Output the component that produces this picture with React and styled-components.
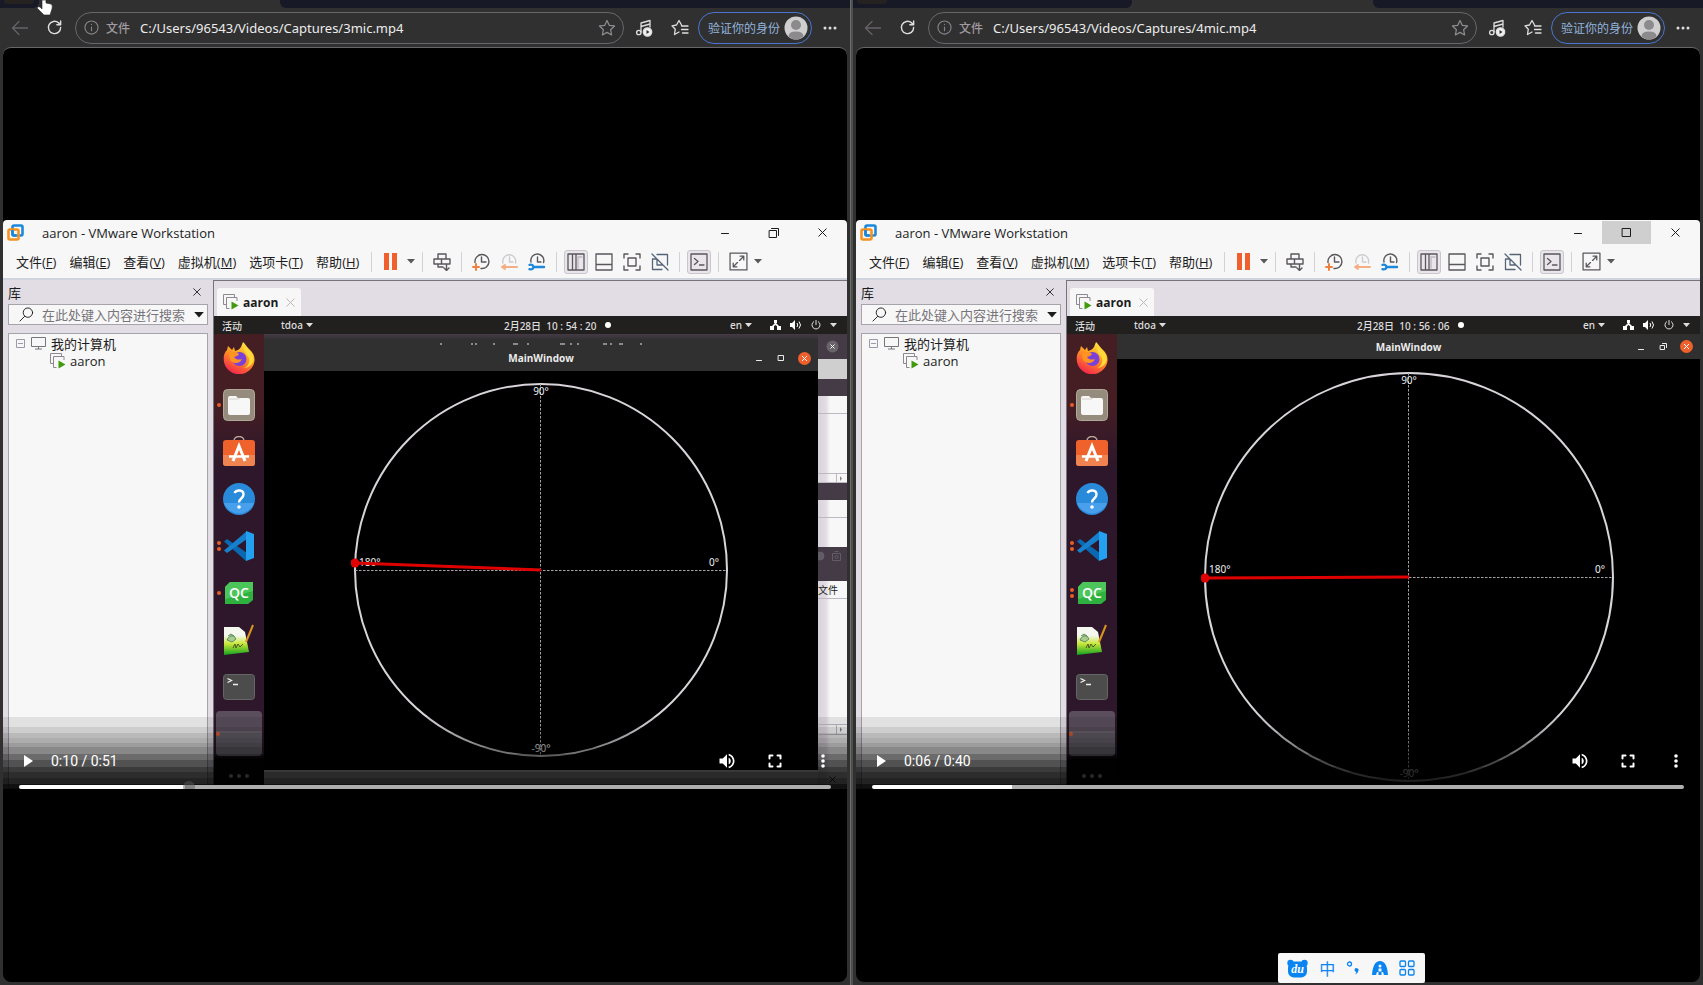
import React, { useState } from 'react';
import styled, { createGlobalStyle } from 'styled-components';

const GlobalStyle = createGlobalStyle`
  * { box-sizing: border-box; }
  body {
    margin: 0;
    background: #303030;
    font-family: 'Open Sans', 'Noto Sans CJK SC', sans-serif;
  }
  button {
    display: flex;
    align-items: center;
    justify-content: center;
    padding: 0;
    border: none;
    background: none;
    color: inherit;
    font: inherit;
    cursor: pointer;
  }
  svg { display: block; flex: none; }
`;

const Screen = styled.div`
  position: relative;
  display: grid;
  grid-template-columns: 1fr 3px 1fr;
  min-height: 100vh;
  overflow: hidden;
`;
const Divider = styled.div`
  background: #4c504c;
  border-left: 1px solid #6a6d6a;
`;
const Browser = styled.section`
  display: flex;
  flex-direction: column;
  min-width: 0;
  background: #303030;
`;

/* browser chrome */
const TabStrip = styled.div`
  display: flex;
  height: 8px;
  background: #303030;
`;
const TabGap = styled.div`
  width: ${(p) => p.$width || 'auto'};
  flex: ${(p) => (p.$width ? 'none' : 1)};
  background: #171a26;
  border-radius: ${(p) => (p.$width ? '0 0 6px 0' : '0 0 0 6px')};
`;
const TabHint = styled.div`
  width: 30px;
  height: 4px;
  margin-left: 4px;
  background: #26221f;
  border-radius: 0 0 8px 8px;
`;
const ActiveTab = styled.div`
  width: 241px;
`;
const Toolbar = styled.div`
  display: flex;
  align-items: center;
  height: 39px;
  padding: 0 4px 0 7px;
  color: #dedede;
`;
const ChromeButton = styled.button`
  width: ${(p) => p.$width || 36}px;
  height: 32px;
  color: ${(p) => (p.$dim ? '#656268' : '#dedede')};
`;
const AddressBar = styled.div`
  flex: 1;
  min-width: 0;
  display: flex;
  align-items: center;
  height: 32px;
  padding: 0 7px 0 8px;
  border: 1px solid #68666a;
  border-radius: 16px;
`;
const Scheme = styled.span`
  margin: 0 8px 0 7px;
  font-size: 12px;
  font-weight: 500;
  color: #a09ba0;
`;
const UrlInput = styled.input`
  flex: 1;
  min-width: 0;
  padding: 0 2px;
  border: none;
  outline: none;
  background: none;
  color: #ececec;
  font-family: 'Noto Sans', sans-serif;
  font-size: 13px;
`;
const Profile = styled.button`
  && {
    height: 32px;
    margin: 0 2px;
    padding: 0 3px 0 9px;
    gap: 4px;
    border: 1px solid #4a74d0;
    border-radius: 16px;
    color: #92b4dc;
    font-size: 12px;
    white-space: nowrap;
  }
`;
const Viewport = styled.main`
  flex: 1;
  display: flex;
  flex-direction: column;
  justify-content: center;
  margin: 0 3px 3px;
  padding-bottom: 21px;
  border-top: 1px solid #68666a;
  border-radius: 8px;
  background: #000;
`;
const Video = styled.div`
  position: relative;
  overflow: hidden;
  background: #f7f7f7;
  color: #1c1c1c;
  border-radius: 4px 4px 0 0;
`;

/* VMware window */
const TitleBar = styled.header`
  display: flex;
  align-items: center;
  height: 25px;
  padding-left: 4px;
`;
const Title = styled.h1`
  flex: 1;
  margin: 0 0 0 18px;
  font-size: 13px;
  font-weight: 400;
`;
const WinButton = styled.button`
  width: 49px;
  height: 23px;
  && { background: ${(p) => (p.$hover ? '#cfcfcf' : 'none')}; }
`;
const MenuBar = styled.nav`
  display: flex;
  align-items: center;
  height: 33px;
  padding-left: 13px;
  font-size: 13px;
`;
const MenuGroup = styled.div`
  display: flex;
  gap: 13px;
  width: 350px;
  flex: none;
`;
const MenuItem = styled.button`
  white-space: nowrap;
`;
const Separator = styled.i`
  width: 1px;
  height: 20px;
  margin: 0 5px;
  background: #d4d0d6;
`;
const ToolButton = styled.button`
  width: ${(p) => p.$width || 28}px;
  height: 28px;
  color: #5a575c;
`;
const Pressed = styled.span`
  padding: 2px;
  border: 1px solid #cbc6ce;
  border-radius: 3px;
  background: #e9e5eb;
`;
const Body = styled.div`
  display: flex;
  border-top: 2px solid #d0d4dc;
  background: #e2dde4;
`;
const Library = styled.aside`
  display: flex;
  flex-direction: column;
  width: 210px;
  padding: 0 5px;
`;
const LibraryHead = styled.div`
  display: flex;
  align-items: center;
  justify-content: space-between;
  height: 24px;
  padding-right: 7px;
  font-size: 13px;
`;
const SearchBox = styled.label`
  display: flex;
  align-items: center;
  height: 21px;
  padding: 0 3px 0 10px;
  border: 1px solid #a7a3ab;
  background: #f7f7f7;
`;
const SearchInput = styled.input`
  flex: 1;
  min-width: 0;
  height: 18px;
  margin-left: 8px;
  padding: 0;
  border: none;
  outline: none;
  background: none;
  font-family: 'Open Sans', 'Noto Sans CJK SC', sans-serif;
  font-size: 13px;
  &::placeholder { color: #77747a; }
`;
const Tree = styled.ul`
  flex: 1;
  margin: 8px 0 0;
  padding: 0 7px;
  border: 1px solid #a7a3ab;
  background: #f7f7f7;
  list-style: none;
`;
const TreeItem = styled.li`
  display: flex;
  align-items: center;
  gap: 4px;
  height: 18px;
  padding-left: ${(p) => p.$indent || 0}px;
  font-size: 13px;
`;
const Machine = styled.div`
  flex: 1;
  min-width: 0;
  display: flex;
  flex-direction: column;
  border-top: 1px solid #77737c;
  border-left: 1px solid #77737c;
`;
const MachineTabs = styled.div`
  display: flex;
  align-items: flex-end;
  height: 35px;
  padding-left: 3px;
`;
const MachineTab = styled.div`
  display: flex;
  align-items: center;
  gap: 4px;
  height: 28px;
  padding: 0 6px;
  border-radius: 3px 3px 0 0;
  background: #f7f7f7;
  font-size: 12px;
  font-weight: 700;
  button { margin-left: 4px; }
`;

/* Ubuntu guest */
const TopPanel = styled.div`
  display: grid;
  grid-template-columns: 5fr auto 4fr;
  align-items: center;
  height: 18px;
  padding: 0 10px 0 8px;
  background: #22201f;
  color: #dedede;
  font-family: 'Noto Sans', 'Noto Sans CJK SC', sans-serif;
  font-size: 10px;
  font-weight: 500;
`;
const PanelGroup = styled.div`
  display: flex;
  align-items: center;
  gap: ${(p) => p.$gap}px;
  justify-content: ${(p) => (p.$end ? 'flex-end' : 'flex-start')};
`;
const PanelButton = styled.button`
  && { gap: 3px; }
`;
const RecordDot = styled.i`
  width: 6px;
  height: 6px;
  border-radius: 50%;
  background: #fff;
`;
const Desktop = styled.div`
  display: flex;
  flex: 1;
`;
const Dock = styled.div`
  display: flex;
  flex-direction: column;
  width: 50px;
  height: 455px;
  background: linear-gradient(#451e24 0 70px, #2e172b 130px 420px, #050305 425px);
`;
const DockItem = styled.button`
  && {
    height: 47px;
    display: grid;
    grid-template-columns: 9px 32px 9px;
  }
`;
const Pips = styled.span`
  display: flex;
  flex-direction: column;
  align-items: center;
  gap: 2px;
  i {
    width: 4px;
    height: 4px;
    border-radius: 50%;
    background: #e55e2a;
  }
`;
const EmptySlot = styled.div`
  display: flex;
  align-items: center;
  height: 45px;
  margin: 1px 2px;
  border-radius: 4px;
  background: linear-gradient(#5a4e5c 45%, #66606a 45%);
`;
const DockDots = styled.div`
  display: flex;
  justify-content: center;
  gap: 4px;
  padding-top: 17px;
  i {
    width: 4px;
    height: 4px;
    border-radius: 50%;
    background: #ddd;
  }
`;
const Stage = styled.div`
  flex: 1;
  min-width: 0;
  display: flex;
  background: #38343e;
`;
const StageColumn = styled.div`
  flex: 1;
  min-width: 0;
  display: flex;
  flex-direction: column;
`;
const BackEdge = styled.div`
  display: flex;
  align-items: flex-end;
  justify-content: center;
  height: 11px;
  background: linear-gradient(#453b47, #303030 6px);
`;
const QtWindow = styled.div`
  flex: 1;
  display: flex;
  flex-direction: column;
  border-bottom: ${(p) => (p.$max ? 0 : 19)}px solid #e8e8e8;
  background: #000;
`;
const QtTitle = styled.div`
  display: grid;
  grid-template-columns: 1fr auto 1fr;
  align-items: center;
  height: ${(p) => (p.$max ? 25 : 26)}px;
  background: #303030;
  color: #ececec;
  font-size: 10px;
  font-weight: 700;
`;
const QtButtons = styled.div`
  grid-column: 3;
  display: flex;
  justify-content: flex-end;
  align-items: center;
  gap: 12px;
  padding-right: 7px;
`;
const QtName = styled.span`
  grid-column: 2;
`;
const DialBox = styled.div`
  display: flex;
  justify-content: center;
  height: 0;
  flex: 1;
  padding-top: ${(p) => (p.$max ? 10 : 9)}px;
`;
const Behind = styled.div`
  width: 29px;
  overflow: hidden;
  display: flex;
  flex-direction: column;
`;
const tones = {
  dark: '#453b47',
  grey: '#cfcfcf',
  light: 'linear-gradient(90deg, #d8d3da, #e2dde4 8px, #f7f7f7 12px)',
};
const Slice = styled.div`
  display: flex;
  align-items: center;
  justify-content: ${(p) => p.$align || 'center'};
  height: ${(p) => p.$height}px;
  background: ${(p) => tones[p.$tone || 'light']};
  border-bottom: ${(p) => (p.$line ? '1px solid #beb8c2' : 'none')};
  font-size: 10px;
  color: #222;
  white-space: nowrap;
`;

/* video controls */
const FADE = [
  [0, 0.09], [10, 0.17], [16, 0.25], [21, 0.3], [26, 0.37], [30, 0.45], [37, 0.57],
  [43, 0.67], [50, 0.76], [55, 0.82], [61, 0.86], [67, 0.93],
];
const fadeStops = FADE.map(([y, a], i) => {
  const end = i + 1 < FADE.length ? FADE[i + 1][0] : 72;
  return `rgba(0,0,0,${a}) ${y}px ${end}px`;
}).join(', ');

const Controls = styled.div`
  position: absolute;
  left: 0;
  right: 0;
  bottom: 0;
  height: 72px;
  padding: 30px 16px 0;
  color: #fff;
  background: linear-gradient(${fadeStops});
`;
const ControlRow = styled.div`
  display: flex;
  align-items: center;
  height: 28px;
  margin-right: -16px;
`;
const ControlButton = styled.button`
  width: ${(p) => p.$width || 48}px;
  height: 28px;
`;
const Time = styled.span`
  flex: 1;
  margin-left: 14px;
  font-family: Roboto, sans-serif;
  font-size: 14px;
`;
const Seek = styled.input`
  appearance: none;
  display: block;
  width: 100%;
  height: 4px;
  margin: 10px 0 0;
  border-radius: 2px;
  background: linear-gradient(90deg, #fff ${(p) => p.$played}%, #afafaf ${(p) => p.$played}%);
  &::-webkit-slider-thumb {
    appearance: none;
    width: 12px;
    height: 12px;
    border-radius: 50%;
    background: ${(p) => (p.$thumb ? 'rgba(90, 90, 90, 0.5)' : 'transparent')};
  }
`;

/* input method bar */
const ImeBar = styled.div`
  position: absolute;
  right: 278px;
  bottom: 2px;
  display: flex;
  align-items: center;
  justify-content: space-between;
  width: 147px;
  height: 30px;
  padding: 0 10px 0 9px;
  border-radius: 2px;
  background: #f7f7f7;
  color: #0a84f0;
  font-size: 16px;
`;
const Pointer = styled.svg`
  position: absolute;
  left: 37px;
  top: 0;
`;

const Line = ({ size = 16, box = 16, w = 1, children }) => (
  <svg width={size} height={size} viewBox={`0 0 ${box} ${box}`} fill='none' stroke='currentColor' strokeWidth={w} strokeLinecap='round' strokeLinejoin='round'>
    {children}
  </svg>
);
const Caret = ({ w = 8, color = 'currentColor' }) => (
  <svg width={w} height={w / 2 + 1} viewBox='0 0 8 5' fill={color}>
    <path d='M0 0h8L4 4.6z' />
  </svg>
);
const Cross = ({ size = 9, color = 'currentColor' }) => (
  <svg width={size} height={size} viewBox='0 0 9 9' stroke={color} fill='none'>
    <path d='M.5.5l8 8M8.5.5l-8 8' />
  </svg>
);
const VmIcon = () => (
  <svg width='16' height='16' viewBox='0 0 16 16' fill='none' stroke='#8d8991'>
    <path d='M3 10.5H.5V.5h11V3' />
    <path d='M6.500 14.500H3.500V3.500h10.500V7' />
    <path d='M8.500 7.500v8l7-4z' fill='#3f9a0c' stroke='none' />
  </svg>
);
const ScrollEnd = () => (
  <svg width='12' height='9' viewBox='0 0 12 9'>
    <path d='M1.500 0v9' stroke='#beb8c2' />
    <path d='M5 2v5l2-2.500z' fill='#888' />
  </svg>
);
const STAR = 'M8 1.300l2 4.300 4.700.6-3.500 3.300.9 4.700L8 11.900l-4.100 2.300.9-4.700L1.300 6.200 6 5.600z';

const tools = {
  send: (
    <Line size={18} box={18} w={1.4}>
      <path d='M5 6V1h8v5M1 6h7.500v5H1zM8.500 6H17v5H8.500zM5 11v3h5M13.500 11v6M11 15l2.500 2.500L16 15' />
    </Line>
  ),
  snapshot: (
    <Line size={18} box={18} w={1.4}>
      <path d='M3 9.500A7 7 0 1 1 9 15.500M9.500 4v5H14' />
      <path d='M4 11v6M1 14h6' stroke='#f08040' strokeWidth='2' />
    </Line>
  ),
  revert: (
    <Line size={18} box={18} w={1.4}>
      <path d='M3 10A6.500 6.500 0 1 1 15.500 10M9.500 4v5H13' stroke='#cfcbd2' />
      <path d='M17 14H3M5 12l-3 2 3 2' stroke='#f4ae84' strokeWidth='2' />
    </Line>
  ),
  manage: (
    <Line size={18} box={18} w={1.4}>
      <path d='M3 9A6.500 6.500 0 1 1 15.500 9.500M9.500 4v5H13' />
      <path d='M6 14h10M1.500 11.800q3.500-.8 4 2.200-.5 3-4 2.200' stroke='#1c88dc' strokeWidth='2.400' />
    </Line>
  ),
  sidebar: (
    <Line size={18} box={18} w={1.3}>
      <path d='M1 1h16v16H1zM5.500 1v16M9 1v16' />
      <path d='M11 4h4M11 4v11' stroke='#bdb8c0' />
    </Line>
  ),
  strip: (
    <Line size={18} box={18} w={1.3}>
      <path d='M1 1h16v16H1zM1 11.500h16' />
    </Line>
  ),
  full: (
    <Line size={18} box={18} w={1.4}>
      <path d='M1 5V1h4M13 1h4v4M17 13v4h-4M5 17H1v-4M5 5h8v8H5z' />
    </Line>
  ),
  unity: (
    <Line size={18} box={18} w={1.3}>
      <path d='M6 1.500h10.500V12M11 16.500H1.500V6H5M6 6v6h6M1 1l16 16' stroke='#56647a' />
    </Line>
  ),
  console: (
    <Line size={18} box={18} w={1.3}>
      <path d='M1 1h16v16H1zM4.500 5.500L8 8.500l-3.500 3M9.500 12H14' />
    </Line>
  ),
  expand: (
    <Line size={19} box={18} w={1.2}>
      <path d='M1 1h16v16H1zM4 14l4-4M4 10.500V14h3.500M10 8l4-4M10.500 4H14v3.500' />
    </Line>
  ),
};

const dockApps = [
  {
    name: 'Firefox',
    pips: 0,
    icon: (
      <svg width='32' height='32' viewBox='0 0 32 32'>
        <defs>
          <linearGradient id='fox' x1='.8' y1='0' x2='.3' y2='1'>
            <stop offset='0' stopColor='#fff04a' />
            <stop offset='.45' stopColor='#ff9a20' />
            <stop offset='1' stopColor='#f5224e' />
          </linearGradient>
        </defs>
        <path fill='url(#fox)' d='M20 0c3 3 4 5 6 7 3 3 6 6 5.500 12A15.500 15.500 0 0 1 1 20C0 13 2 10 4 8l1-4 4 4 2-3 1 4c3-1 5-2 6-4z' />
        <circle cx='16.500' cy='17' r='7' fill='#7a40d8' />
        <path fill='#ff9420' d='M6 11c4-2 8-1 10 1-1 2-3 2-5 3 2 3 5 3 8 2-2 5-9 5-12 1z' />
        <path fill='#ffd83a' d='M20 0c3 6-1 8 4 13s1 12-3 13c8-1 11-7 9-12-1-4-4-5-5-7-2-2-3-4-5-7z' />
      </svg>
    ),
  },
  {
    name: 'Files',
    pips: 1,
    icon: (
      <svg width='32' height='32' viewBox='0 0 32 32'>
        <rect x='.5' y='.5' width='31' height='31' rx='4' fill='#968c7e' stroke='#b0a898' />
        <path fill='#f7f7f7' d='M5 9q0-2 2-2h6l2 2h10q2 0 2 2v13q0 2-2 2H7q-2 0-2-2z' />
        <path stroke='#d8d2c8' d='M6 10h9l2-1' fill='none' />
      </svg>
    ),
  },
  {
    name: 'Software',
    pips: 0,
    icon: (
      <svg width='32' height='32' viewBox='0 0 32 32'>
        <path d='M11 5c0-6 10-6 10 0' fill='none' stroke='#b8a898' strokeWidth='1.500' />
        <rect y='4' width='32' height='26' rx='3' fill='#f0622c' />
        <path fill='#f08450' d='M0 19h32v8q0 3-3 3H3q-3 0-3-3z' />
        <path fill='none' stroke='#fff' strokeWidth='3' d='M10 25l6-15 6 15' />
        <path stroke='#fff' strokeWidth='2.500' d='M6 20.500h20' />
      </svg>
    ),
  },
  {
    name: 'Help',
    pips: 0,
    icon: (
      <svg width='32' height='32' viewBox='0 0 32 32'>
        <circle cx='16' cy='16' r='16' fill='#288ad8' />
        <path d='M1 20a16 16 0 0 0 30 0z' fill='#48a0ec' />
        <path d='M11.500 10c2-3.500 9-3.500 9 1.500 0 4-4.500 4-4.500 8' fill='none' stroke='#fff' strokeWidth='2.400' />
        <circle cx='16' cy='24' r='1.800' fill='#fff' />
      </svg>
    ),
  },
  {
    name: 'Visual Studio Code',
    pips: 2,
    icon: (
      <svg width='32' height='32' viewBox='0 0 32 32'>
        <path fill='#0a68b0' d='M24 23L4 9 1 11.500 23 31z' />
        <path fill='#1680cc' d='M24 1L1 20.500 4 23l20-14z' />
        <path fill='#24a0f0' d='M23 1l8 3v24l-8 3z' />
      </svg>
    ),
  },
  {
    name: 'Qt Creator',
    pips: 1,
    icon: (
      <svg width='32' height='32' viewBox='0 0 32 32'>
        <path fill='#2fb13f' d='M7 5h23v18l-5 4H2V10z' />
        <path fill='#4cc65a' d='M7 5h23v9L2 22V10z' />
        <text x='16' y='21' textAnchor='middle' fill='#fff' fontFamily='Open Sans, sans-serif' fontSize='14' fontWeight='600'>QC</text>
      </svg>
    ),
  },
  {
    name: 'Notepadqq',
    pips: 0,
    icon: (
      <svg width='32' height='32' viewBox='0 0 32 32'>
        <defs>
          <linearGradient id='pad' x1='0' y1='0' x2='0' y2='1'>
            <stop offset='.3' stopColor='#f4f8ee' />
            <stop offset='.6' stopColor='#c8e838' />
            <stop offset='1' stopColor='#10a020' />
          </linearGradient>
        </defs>
        <path fill='url(#pad)' d='M1 3h15l6 5 4 20-25 3z' />
        <path d='M4 16q2-5 7-4l2 3-4 3zM5 12l3-2 3 2' fill='#a8cc90' stroke='#4c7a4c' strokeWidth='.8' />
        <path d='M10 24l2-4 1 4 2-4 2 3 3-3' fill='none' stroke='#4a5a28' />
        <path d='M23 18l7-17' stroke='#d89420' strokeWidth='2' />
      </svg>
    ),
  },
  {
    name: 'Terminal',
    pips: 0,
    icon: (
      <svg width='32' height='32' viewBox='0 0 32 32'>
        <rect x='.5' y='3.500' width='31' height='25' rx='3' fill='#4c4c4c' stroke='#666' />
        <path d='M4.500 7.500l4 2-4 2M10 13.500h5' fill='none' stroke='#eee' strokeWidth='1.300' />
      </svg>
    ),
  },
];

const Dial = ({ r, drop }) => {
  const c = r + 4;
  return (
    <svg width={c * 2} height={c * 2} viewBox={`${-c} ${-c} ${c * 2} ${c * 2}`} fontFamily='Noto Sans, sans-serif' fontSize='10' fill='#f0f0f0'>
      <circle r={r} fill='none' stroke='#d8d4da' strokeWidth='2' />
      <path d={`M${-r} .5H${r}M-.5 ${-r}V${r}`} stroke='#a8a4ac' strokeDasharray='2.500 1.500' />
      <text x='0' y={-r + 11} textAnchor='middle'>90°</text>
      <text x='0' y={r - 4} textAnchor='middle'>-90°</text>
      <text x={-r + 4} y='-4'>180°</text>
      <text x={r - 8} y='-4' textAnchor='end'>0°</text>
      <path d={`M0 0L${-r} ${drop}`} stroke='#e00000' strokeWidth='3' />
      <circle cx={-r} cy={drop} r='4.500' fill='#e00000' />
    </svg>
  );
};

const QtHeader = ({ max }) => (
  <QtTitle $max={max}>
    <QtName>MainWindow</QtName>
    <QtButtons>
      <button aria-label='Minimize'>
        <Line size={10} box={10}><path d='M2.500 7.500h5' /></Line>
      </button>
      <button aria-label='Resize'>
        <Line size={10} box={10}>
          {max ? <path d='M2.500 3.500h4v4h-4zM4.500 1.500h4v4' /> : <path d='M2.500 2.500h5v5h-5z' />}
        </Line>
      </button>
      <button aria-label='Close'>
        <svg width='13' height='13' viewBox='0 0 13 13'>
          <circle cx='6.500' cy='6.500' r='6.500' fill='#f0602c' />
          <path d='M4 4l5 5M9 4L4 9' stroke='#fff' />
        </svg>
      </button>
    </QtButtons>
  </QtTitle>
);

const BehindWindows = () => (
  <Behind>
    <Slice $height={25} $tone='dark'>
      <svg width='13' height='13' viewBox='0 0 13 13'>
        <circle cx='6.500' cy='6.500' r='6' fill='#68646a' />
        <path d='M4.500 4.500l4 4M8.500 4.500l-4 4' stroke='#fff' />
      </svg>
    </Slice>
    <Slice $height={20} $tone='grey' />
    <Slice $height={17} $tone='dark' />
    <Slice $height={18} $line />
    <Slice $height={60} $line />
    <Slice $height={9} $line $align='flex-end'><ScrollEnd /></Slice>
    <Slice $height={17} $tone='dark' />
    <Slice $height={18} $line />
    <Slice $height={29} />
    <Slice $height={17} $tone='dark'>
      <svg width='29' height='12' viewBox='0 0 29 12' fill='none' stroke='#625c66'>
        <circle cx='2' cy='6' r='4' fill='#625c66' />
        <path d='M14.500 3.500h8v7h-8zM16.500 1.500h4' />
        <circle cx='18.500' cy='7' r='1.500' />
      </svg>
    </Slice>
    <Slice $height={17} $tone='dark' />
    <Slice $height={18} $line $align='flex-start'>文件</Slice>
    <Slice $height={126} $line />
    <Slice $height={10} $line $align='flex-end'><ScrollEnd /></Slice>
    <Slice $height={35} />
    <Slice $height={19}><Cross size={7} color='#000' /></Slice>
  </Behind>
);

const menus = [
  ['文件', 'F'], ['编辑', 'E'], ['查看', 'V'], ['虚拟机', 'M'], ['选项卡', 'T'], ['帮助', 'H'],
];

const Player = ({ time, played, thumb, clock, radius, drop, max }) => {
  const [position, setPosition] = useState(played);
  return (
    <Video>
      <TitleBar>
        <svg width='17' height='17' viewBox='0 0 17 17' fill='none' strokeWidth='2.600'>
          <rect x='5.500' y='1.500' width='10' height='10' rx='1.500' stroke='#1c88dc' />
          <rect x='1.500' y='5.500' width='10' height='10' rx='1.500' stroke='#f59220' />
          <path d='M5.500 6v4q0 1.500 1.500 1.500h2' stroke='#1c88dc' />
        </svg>
        <Title>aaron - VMware Workstation</Title>
        <WinButton aria-label='最小化'><Line size={10} box={10}><path d='M1.500 5.500h7' /></Line></WinButton>
        <WinButton aria-label='还原' $hover={max}>
          <Line size={11} box={11}>
            {max ? <path d='M1.500 1.500h8v8h-8z' /> : <path d='M1.500 3.500h7v7h-7zM3.500 1.500h7v7' />}
          </Line>
        </WinButton>
        <WinButton aria-label='关闭'><Cross /></WinButton>
      </TitleBar>
      <MenuBar>
        <MenuGroup>
          {menus.map(([label, key]) => (
            <MenuItem key={key}>{label}(<u>{key}</u>)</MenuItem>
          ))}
        </MenuGroup>
        <Separator />
        <ToolButton aria-label='暂停'>
          <svg width='14' height='17' viewBox='0 0 14 17' fill='#f0602c'><path d='M0 0h5v17H0zM8 0h5v17H8z' /></svg>
        </ToolButton>
        <ToolButton aria-label='电源' $width={12}><Caret /></ToolButton>
        <Separator />
        <ToolButton aria-label='发送'>{tools.send}</ToolButton>
        <Separator />
        <ToolButton aria-label='快照'>{tools.snapshot}</ToolButton>
        <ToolButton aria-label='恢复'>{tools.revert}</ToolButton>
        <ToolButton aria-label='管理'>{tools.manage}</ToolButton>
        <Separator />
        <ToolButton aria-label='库'><Pressed>{tools.sidebar}</Pressed></ToolButton>
        <ToolButton aria-label='缩略图'>{tools.strip}</ToolButton>
        <ToolButton aria-label='全屏'>{tools.full}</ToolButton>
        <ToolButton aria-label='Unity'>{tools.unity}</ToolButton>
        <Separator />
        <ToolButton aria-label='控制台'><Pressed>{tools.console}</Pressed></ToolButton>
        <Separator />
        <ToolButton aria-label='拉伸'>{tools.expand}</ToolButton>
        <ToolButton aria-label='拉伸选项' $width={12}><Caret /></ToolButton>
      </MenuBar>
      <Body>
        <Library>
          <LibraryHead>
            <span>库</span>
            <button aria-label='关闭库'><Cross size={8} /></button>
          </LibraryHead>
          <SearchBox>
            <Line size={15}><circle cx='9.500' cy='6' r='5' /><path d='M6 10l-5 5' /></Line>
            <SearchInput aria-label='搜索' placeholder='在此处键入内容进行搜索' />
            <Caret w={10} />
          </SearchBox>
          <Tree>
            <TreeItem>
              <svg width='9' height='9' viewBox='0 0 9 9' fill='none' stroke='#9a9aaa'><path d='M.5.5h8v8h-8zM2 4.500h5' /></svg>
              <svg width='18' height='14' viewBox='0 0 18 14' fill='none' stroke='#77747a'><path d='M2.500 1.500h14v9h-14zM9.500 11v2M6 13h7' /></svg>
              我的计算机
            </TreeItem>
            <TreeItem $indent={34}><VmIcon />aaron</TreeItem>
          </Tree>
        </Library>
        <Machine>
          <MachineTabs>
            <MachineTab>
              <VmIcon />
              aaron
              <button aria-label='关闭选项卡'><Cross color='#bdb8c0' /></button>
            </MachineTab>
          </MachineTabs>
          <TopPanel>
            <PanelGroup $gap={39}>
              <PanelButton>活动</PanelButton>
              <PanelButton>tdoa <Caret w={7} /></PanelButton>
            </PanelGroup>
            <PanelGroup $gap={9}>
              <span>2月28日&nbsp; {clock}</span>
              <RecordDot />
            </PanelGroup>
            <PanelGroup $gap={9} $end>
              <PanelButton>en <Caret w={7} /></PanelButton>
              <i />
              <svg width='11' height='10' viewBox='0 0 11 10' fill='#fff'><path d='M4 0h3v3H4zM0 6h4v4H0zM7 6h4v4H7zM5 3h1l4 4H8L5.500 5 3 7H1z' /></svg>
              <svg width='12' height='10' viewBox='0 0 12 10' fill='#fff'><path d='M0 3h2l3-3v10L2 7H0z' /><path d='M7 3q1.500 2 0 4M9 1.500q3 3.500 0 7' fill='none' stroke='#fff' /></svg>
              <svg width='10' height='10' viewBox='0 0 10 10' fill='none' stroke='#ddd'><path d='M3 1.500a4 4 0 1 0 4 0M5 0v5' /></svg>
              <Caret w={7} />
            </PanelGroup>
          </TopPanel>
          <Desktop>
            <Dock>
              {dockApps.map((app) => {
                const pips = max && app.name === 'Qt Creator' ? 2 : app.pips;
                return (
                  <DockItem key={app.name} aria-label={app.name}>
                    <Pips>{[...Array(pips)].map((_, i) => <i key={i} />)}</Pips>
                    {app.icon}
                  </DockItem>
                );
              })}
              <EmptySlot><Pips><i /></Pips></EmptySlot>
              <DockDots><i /><i /><i /></DockDots>
            </Dock>
            <Stage>
              <StageColumn>
                {!max && (
                  <BackEdge>
                    <svg width='206' height='2' viewBox='0 0 206 2' stroke='#8d898f' strokeWidth='2'>
                      <path d='M2 1h2M33 1h2M37 1h2M55 1h2M75 1h5M89 1h2M122 1h5M132 1h2M139 1h2M165 1h4M172 1h2M181 1h4M202 1h2' />
                    </svg>
                  </BackEdge>
                )}
                <QtWindow $max={max}>
                  <QtHeader max={max} />
                  <DialBox $max={max}><Dial r={radius} drop={drop} /></DialBox>
                </QtWindow>
              </StageColumn>
              {!max && <BehindWindows />}
            </Stage>
          </Desktop>
        </Machine>
      </Body>
      <Controls>
        <ControlRow>
          <ControlButton aria-label='播放' $width={18}>
            <svg width='9' height='12' viewBox='0 0 9 12' fill='#fff'><path d='M0 0l9 6-9 6z' /></svg>
          </ControlButton>
          <Time>{time}</Time>
          <ControlButton aria-label='音量'>
            <svg width='20' height='20' viewBox='0 0 24 24' fill='#fff'>
              <path d='M3 9v6h4l5 5V4L7 9H3zm13.500 3c0-1.770-1.020-3.290-2.500-4.030v8.050c1.480-.73 2.500-2.250 2.500-4.020zM14 3.230v2.060c2.890.86 5 3.540 5 6.710s-2.110 5.850-5 6.710v2.060c4.010-.91 7-4.490 7-8.770s-2.990-7.860-7-8.770z' />
            </svg>
          </ControlButton>
          <ControlButton aria-label='全屏播放'>
            <Line size={14} box={14} w={2}><path d='M1.500 4.500v-3h3M9.500 1.500h3v3M12.500 9.500v3h-3M4.500 12.500h-3v-3' /></Line>
          </ControlButton>
          <ControlButton aria-label='更多'>
            <svg width='4' height='14' viewBox='0 0 4 14' fill='#fff'><circle cx='2' cy='2' r='1.800' /><circle cx='2' cy='7' r='1.800' /><circle cx='2' cy='12' r='1.800' /></svg>
          </ControlButton>
        </ControlRow>
        <Seek
          type='range'
          aria-label='进度'
          min='0'
          max='100'
          step='0.1'
          value={position}
          $played={position}
          $thumb={thumb}
          onChange={(e) => setPosition(Number(e.target.value))}
        />
      </Controls>
    </Video>
  );
};

const BrowserPane = ({ file, tabStart, ...video }) => (
  <Browser>
    <TabStrip>
      <TabGap $width={tabStart}><TabHint /></TabGap>
      <ActiveTab />
      <TabGap />
    </TabStrip>
    <Toolbar>
      <ChromeButton aria-label='后退' $dim $width={26}>
        <Line size={18} box={18} w={1.3}><path d='M16.500 9H2M8 2.500L1.500 9 8 15.500' /></Line>
      </ChromeButton>
      <ChromeButton aria-label='刷新' $width={42}>
        <Line size={17} box={18} w={1.5}><path d='M15.500 9a6.500 6.500 0 1 1-2.200-4.900L15.500 6M15.500 2v4h-4' /></Line>
      </ChromeButton>
      <AddressBar>
        <Line size={15} w={1.2}><g stroke='#888488'><circle cx='8' cy='8' r='7' /><path d='M8 7.500v4M8 4.500v.3' /></g></Line>
        <Scheme>文件</Scheme>
        <UrlInput aria-label='地址' defaultValue={`C:/Users/96543/Videos/Captures/${file}`} />
        <ChromeButton aria-label='收藏' $width={18} $dim>
          <Line size={18} w={1.1}><path stroke='#8f8b91' d={STAR} /></Line>
        </ChromeButton>
      </AddressBar>
      <ChromeButton aria-label='媒体' $width={40}>
        <Line size={18} box={18} w={1.3}>
          <path d='M6 13V4l9-2.500V8M6 7.500L15 5' />
          <circle cx='3.800' cy='13.500' r='2.200' />
          <circle cx='12.500' cy='13' r='4.200' fill='#f0f0f0' />
          <path d='M11.500 11v4l3-2z' fill='#303030' stroke='none' />
        </Line>
      </ChromeButton>
      <ChromeButton aria-label='收藏夹' $width={32}>
        <Line size={18} box={18} w={1.3}>
          <path d='M10.500 6L8 1.500 5.500 6 1 6.800l3.300 3.400L3.500 15.500 8 13M10.500 7H17M10.500 10.500H17M11.500 14H17' />
        </Line>
      </ChromeButton>
      <Profile>
        验证你的身份
        <svg width='24' height='24' viewBox='0 0 24 24'>
          <circle cx='12' cy='12' r='11.500' fill='#cfcfcf' />
          <circle cx='12' cy='9' r='5' fill='#8d8a8d' />
          <path d='M4.500 20.500q0-5 7.500-5t7.500 5q-7.500 6-15 0z' fill='#8d8a8d' />
        </svg>
      </Profile>
      <ChromeButton aria-label='设置及其他' $width={32}>
        <svg width='14' height='4' viewBox='0 0 14 4' fill='currentColor'><circle cx='2' cy='2' r='1.500' /><circle cx='7' cy='2' r='1.500' /><circle cx='12' cy='2' r='1.500' /></svg>
      </ChromeButton>
    </Toolbar>
    <Viewport>
      <Player {...video} />
    </Viewport>
  </Browser>
);

export default function App() {
  return (
    <Screen>
      <GlobalStyle />
      <BrowserPane file='3mic.mp4' tabStart='39px' time='0:10 / 0:51' played={20.5} thumb clock='10 : 54 : 20' radius={186} drop={-7} />
      <Divider />
      <BrowserPane file='4mic.mp4' tabStart='279px' time='0:06 / 0:40' played={17.2} clock='10 : 56 : 06' radius={204} drop={1} max />
      <Pointer width='16' height='16' viewBox='0 0 16 16'>
        <path d='M5 0h4v3l5 1q2 1 1 5l-2 6H7L0 8q1-2 3-1l2 2z' fill='#fff' stroke='#222' strokeWidth='.6' />
      </Pointer>
      <ImeBar>
        <svg width='21' height='19' viewBox='0 0 21 19' fill='#0a84f0'>
          <circle cx='3.500' cy='4' r='3.200' /><circle cx='17.500' cy='4' r='3.200' />
          <rect x='1' y='2.500' width='19' height='16' rx='6' />
          <text x='10.500' y='14' textAnchor='middle' fill='#fff' fontFamily='Liberation Serif, serif' fontSize='12' fontStyle='italic' fontWeight='700'>du</text>
        </svg>
        <span>中</span>
        <svg width='14' height='16' viewBox='0 0 14 16' fill='#0a84f0'>
          <circle cx='3.500' cy='4' r='2' fill='none' stroke='#0a84f0' strokeWidth='1.300' />
          <path d='M8.500 10a2 2 0 1 1 3.800 1q-.5 2.500-3 3.500l1-2.600q-1.800-.2-1.800-1.900z' />
        </svg>
        <svg width='16' height='16' viewBox='0 0 16 16' fill='#0a84f0'>
          <path d='M0 15Q1 1 8 1t8 14h-4l-1-3H9.500v3h-3v-3H5l-1 3z' />
          <path d='M6.500 8.500h3v3h-3z' fill='#f7f7f7' />
          <circle cx='8' cy='6' r='1.500' fill='#f7f7f7' />
        </svg>
        <svg width='16' height='16' viewBox='0 0 16 16' fill='none' stroke='#0a84f0' strokeWidth='1.300'>
          <rect x='1' y='1' width='5.500' height='5.500' rx='1' /><rect x='9.500' y='1' width='5.500' height='5.500' rx='1' />
          <rect x='1' y='9.500' width='5.500' height='5.500' rx='1' /><rect x='9.500' y='9.500' width='5.500' height='5.500' rx='1' />
        </svg>
      </ImeBar>
    </Screen>
  );
}
